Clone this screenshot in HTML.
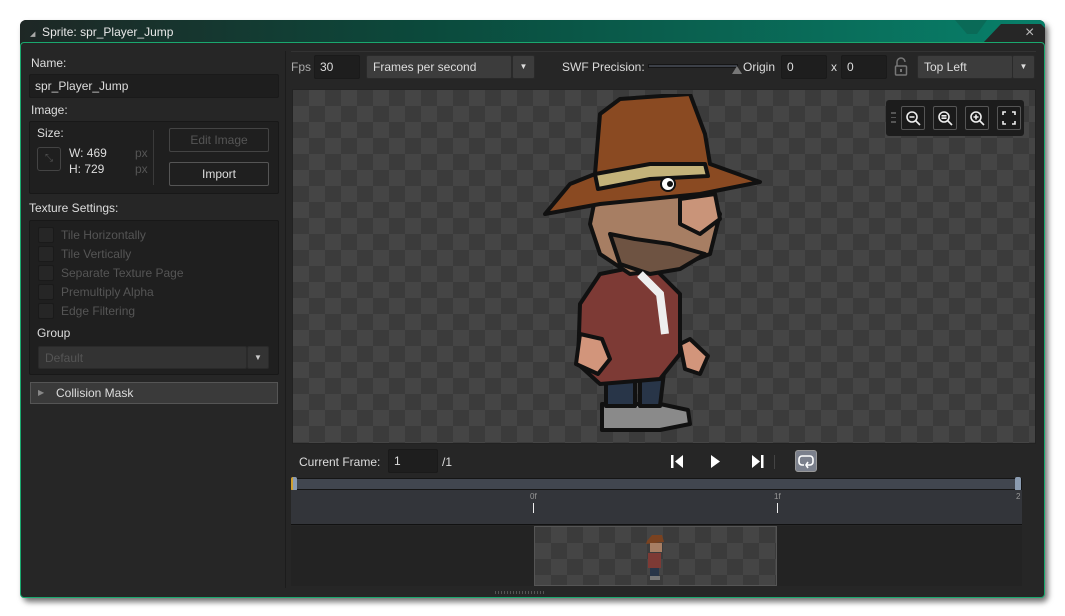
<!DOCTYPE html>
<html><head><meta charset="utf-8"><style>
*{box-sizing:border-box;margin:0;padding:0}
body{width:1065px;height:616px;background:#fff;font-family:"Liberation Sans",sans-serif;font-size:12px;color:#ddd;position:relative;overflow:hidden}
.abs{position:absolute}
.win{left:20px;top:20px;width:1025px;height:578px;background:#262626;border-radius:6px;box-shadow:3px 4px 6px rgba(0,0,0,.55)}
.title{left:20px;top:20px;width:1025px;height:23px;border-radius:6px 6px 0 0;background:linear-gradient(90deg,#1e2725 0%,#0b4a3c 40%,#08806a 100%)}
.body{left:20px;top:42px;width:1025px;height:556px;border:1px solid #1aa86e;border-radius:4px;background:#262626}
.lbl{color:#ddd;font-size:12px}
.box{background:#1f1f1f;border:1px solid #181818;border-radius:2px}
.inp{background:#1e1e1e;border:1px solid #1a1a1a;border-radius:2px;padding-left:5px;line-height:22px}
.btn{border:1px solid #555;border-radius:2px;text-align:center;line-height:22px}
.dd{background:#3c3c3c;border:1px solid #2a2a2a;border-radius:2px;padding-left:6px;line-height:22px}
.dis{color:#555}
.cb{width:16px;height:16px;border:1px solid #1a1a1a;background:#262626;border-radius:2px}
.checker{background-color:#3b3b3b;background-image:linear-gradient(45deg,#454545 25%,transparent 25%,transparent 75%,#454545 75%),linear-gradient(45deg,#454545 25%,transparent 25%,transparent 75%,#454545 75%);background-size:32px 32px;background-position:0 0,16px 16px}
.zb{width:24px;height:24px;border:1px solid #555;border-radius:2px;background:#1a1a1a}
</style></head><body>
<div class="abs win"></div>
<div class="abs title"></div>
<svg class="abs" style="left:955px;top:20px" width="90" height="23"><polygon points="0,0 32,0 22,14 12,14" fill="#0a6a57"/><polygon points="28,23 46,4 86,4 90,8 90,23" fill="#262626"/></svg>
<div class="abs" style="left:30px;top:25px;font-size:12px;color:#e8e8e8"><span style="font-size:7px;color:#aaa">◢</span>&nbsp; Sprite: spr_Player_Jump</div>
<div class="abs" style="left:1025px;top:24px;color:#bbb;font-size:16px">×</div>
<div class="abs body"></div>

<!-- left panel -->
<div class="abs lbl" style="left:31px;top:56px">Name:</div>
<div class="abs inp" style="left:29px;top:74px;width:250px;height:24px;color:#ddd">spr_Player_Jump</div>
<div class="abs lbl" style="left:31px;top:103px">Image:</div>
<div class="abs box" style="left:29px;top:121px;width:250px;height:73px"></div>
<div class="abs lbl" style="left:37px;top:126px">Size:</div>
<div class="abs" style="left:37px;top:147px;width:24px;height:24px;border:1px solid #444;border-radius:3px;color:#555;font-size:10px;text-align:center;line-height:22px">⤡</div>
<div class="abs lbl" style="left:69px;top:146px">W: 469</div>
<div class="abs lbl" style="left:69px;top:162px">H: 729</div>
<div class="abs dis" style="left:135px;top:146px">px</div>
<div class="abs dis" style="left:135px;top:162px">px</div>
<div class="abs" style="left:153px;top:130px;width:1px;height:55px;background:#3a3a3a"></div>
<div class="abs btn dis" style="left:169px;top:128px;width:100px;height:24px;border-color:#444">Edit Image</div>
<div class="abs btn" style="left:169px;top:162px;width:100px;height:24px">Import</div>
<div class="abs lbl" style="left:29px;top:201px">Texture Settings:</div>
<div class="abs box" style="left:29px;top:220px;width:250px;height:155px"></div>
<div class="abs cb" style="left:38px;top:227px"></div><div class="abs dis" style="left:61px;top:228px">Tile Horizontally</div>
<div class="abs cb" style="left:38px;top:246px"></div><div class="abs dis" style="left:61px;top:247px">Tile Vertically</div>
<div class="abs cb" style="left:38px;top:265px"></div><div class="abs dis" style="left:61px;top:266px">Separate Texture Page</div>
<div class="abs cb" style="left:38px;top:284px"></div><div class="abs dis" style="left:61px;top:285px">Premultiply Alpha</div>
<div class="abs cb" style="left:38px;top:303px"></div><div class="abs dis" style="left:61px;top:304px">Edge Filtering</div>
<div class="abs lbl" style="left:37px;top:326px">Group</div>
<div class="abs dd dis" style="left:38px;top:346px;width:209px;height:23px;background:#333">Default</div>
<div class="abs dd" style="left:247px;top:346px;width:22px;height:23px;background:#333;color:#ccc;padding:0;text-align:center;font-size:8px">▼</div>
<div class="abs" style="left:30px;top:382px;width:248px;height:22px;background:#3a3a3a;border:1px solid #555;padding-left:25px;line-height:20px;color:#ddd"><span class="abs" style="left:7px;color:#888;font-size:8px">▶</span>Collision Mask</div>

<!-- right panel -->
<div class="abs" style="left:285px;top:51px;width:1px;height:537px;background:#1c1c1c"></div>
<div class="abs" style="left:291px;top:51px;width:745px;height:1px;background:#333"></div>
<div class="abs" style="left:291px;top:60px;color:#aaa">Fps</div>
<div class="abs inp" style="left:314px;top:55px;width:46px;height:24px">30</div>
<div class="abs dd" style="left:366px;top:55px;width:146px;height:24px">Frames per second</div>
<div class="abs dd" style="left:512px;top:55px;width:23px;height:24px;padding:0;text-align:center;font-size:8px">▼</div>
<div class="abs lbl" style="left:562px;top:60px">SWF Precision:</div>
<div class="abs" style="left:648px;top:64px;width:90px;height:4px;background:#3c4048;border:1px solid #151515"></div>
<div class="abs" style="left:732px;top:66px;width:0;height:0;border-left:5px solid transparent;border-right:5px solid transparent;border-bottom:8px solid #777"></div>
<div class="abs lbl" style="left:743px;top:60px">Origin</div>
<div class="abs inp" style="left:781px;top:55px;width:46px;height:24px">0</div>
<div class="abs lbl" style="left:831px;top:60px">x</div>
<div class="abs inp" style="left:841px;top:55px;width:46px;height:24px">0</div>
<svg class="abs" style="left:893px;top:57px" width="16" height="20"><path d="M4 9V5a4 4 0 0 1 8 0" stroke="#777" stroke-width="1.5" fill="none"/><rect x="2.5" y="9" width="11" height="9" rx="1" stroke="#777" stroke-width="1.5" fill="none"/><rect x="7" y="12" width="2" height="3" fill="#777"/></svg>
<div class="abs dd" style="left:917px;top:55px;width:96px;height:24px">Top Left</div>
<div class="abs dd" style="left:1012px;top:55px;width:23px;height:24px;padding:0;text-align:center;font-size:8px">▼</div>

<div class="abs checker" style="left:292px;top:89px;width:744px;height:355px;border:1px solid #222"></div>
<div class="abs" style="left:886px;top:100px;width:138px;height:36px;background:#1a1a1a;border-radius:3px;opacity:.95"></div>
<div class="abs" style="left:891px;top:112px;width:5px;height:11px;border-top:1px solid #555;border-bottom:1px solid #555;background:linear-gradient(#555 0 1px,transparent 1px 4px,#555 4px 5px,transparent 5px 8px,#555 8px 9px,transparent 9px)"></div>
<div class="abs zb" style="left:901px;top:106px"></div>
<div class="abs zb" style="left:933px;top:106px"></div>
<div class="abs zb" style="left:965px;top:106px"></div>
<div class="abs zb" style="left:997px;top:106px"></div>
<svg class="abs" style="left:901px;top:106px" width="120" height="24" fill="none" stroke="#eee" stroke-width="1.6">
<circle cx="11" cy="11" r="5"/><path d="M15 15l4 4M8.5 11h5"/>
<g transform="translate(32 0)"><circle cx="11" cy="11" r="5"/><path d="M15 15l4 4M8.5 9.8h5M8.5 12.2h5"/></g>
<g transform="translate(64 0)"><circle cx="11" cy="11" r="5"/><path d="M15 15l4 4M8.5 11h5M11 8.5v5"/></g>
<g transform="translate(96 0)"><path d="M6 9V6h3M15 6h3v3M18 15v3h-3M9 18H6v-3"/></g>
</svg>

<!-- character -->
<svg class="abs" style="left:540px;top:94px" width="225" height="342" viewBox="0 0 225 342">
<g stroke="#111" stroke-width="4" stroke-linejoin="round">
<path d="M62 310 L62 336 L120 336 L150 330 L148 316 L120 310Z" fill="#8a8a8a"/>
<path d="M66 270 L66 312 L95 312 L95 270Z M100 270 L100 312 L120 312 L125 270Z" fill="#283548"/>
<path d="M60 180 L40 210 L38 270 L60 290 L120 285 L140 260 L140 200 L110 170Z" fill="#7d3a35"/>
<path d="M40 240 L36 270 L58 280 L70 265 L62 245Z" fill="#d2957b"/>
<path d="M140 250 L145 275 L160 280 L168 262 L150 245Z" fill="#d2957b"/>
<path d="M60 80 L50 130 L60 160 L90 180 L130 175 L170 160 L180 120 L160 90Z" fill="#a77e63"/>
<path d="M70 140 L80 170 L110 180 L140 175 L165 160 L130 150 L95 145Z" fill="#6e5342"/>
<path d="M140 105 L175 100 L180 125 L160 140 L140 130Z" fill="#c99479"/>
<path d="M60 20 L80 5 L150 0 L165 40 L170 70 L220 88 L160 100 L110 105 L60 110 L5 120 L30 90 L55 80Z" fill="#8a4a22"/>
<path d="M55 80 L110 70 L165 70 L168 82 L110 85 L58 95Z" fill="#c4b37a"/>
</g>
<circle cx="128" cy="90" r="7" fill="#fff" stroke="#111" stroke-width="2"/><circle cx="130" cy="90" r="3" fill="#111"/>
<path d="M100 180 L120 200 L125 240" stroke="#eee" stroke-width="8" fill="none"/>
</svg>

<!-- playback -->
<div class="abs lbl" style="left:299px;top:455px">Current Frame:</div>
<div class="abs inp" style="left:388px;top:449px;width:50px;height:24px">1</div>
<div class="abs lbl" style="left:442px;top:455px">/1</div>
<svg class="abs" style="left:668px;top:452px" width="160" height="20" fill="#fff">
<rect x="3" y="3" width="2.5" height="13"/><polygon points="15,3 15,16 7,9.5"/>
<polygon points="43,3 43,16 52,9.5"/>
<polygon points="84,3 84,16 92,9.5"/><rect x="93" y="3" width="2.5" height="13"/>
<rect x="106" y="3" width="1" height="14" fill="#444"/>
</svg>
<div class="abs" style="left:795px;top:450px;width:22px;height:22px;background:#7b808c;border:1px solid #999;border-radius:3px"></div>
<svg class="abs" style="left:795px;top:450px" width="22" height="22" fill="none" stroke="#fff" stroke-width="1.6"><path d="M9 15H7a3 3 0 0 1-3-3V9a3 3 0 0 1 3-3h8a3 3 0 0 1 3 3v3a3 3 0 0 1-3 3h-3"/><path d="M13 12l-2 3 2 3"/></svg>

<div class="abs" style="left:291px;top:478px;width:731px;height:12px;background:#41464f;border:1px solid #151515"></div>
<div class="abs" style="left:291px;top:477px;width:6px;height:14px;background:#8a9bb0;border-radius:2px;border-left:2px solid #d0a030"></div>
<div class="abs" style="left:1015px;top:477px;width:6px;height:14px;background:#8a9bb0;border-radius:2px"></div>
<div class="abs" style="left:291px;top:490px;width:731px;height:35px;background:#33353a;border-bottom:1px solid #111"></div>
<div class="abs" style="left:530px;top:492px;color:#999;font-size:8px">0f</div>
<div class="abs" style="left:533px;top:503px;width:1px;height:10px;background:#eee"></div>
<div class="abs" style="left:774px;top:492px;color:#999;font-size:8px">1f</div>
<div class="abs" style="left:777px;top:503px;width:1px;height:10px;background:#eee"></div>
<div class="abs" style="left:1016px;top:492px;color:#999;font-size:8px">2</div>
<div class="abs" style="left:291px;top:526px;width:731px;height:60px;background:#232323"></div>
<div class="abs checker" style="left:534px;top:526px;width:243px;height:60px;border:1px solid #555"></div>
<svg class="abs" style="left:640px;top:533px" width="30" height="50"><path d="M7 8L12 2h10l2 7-18 2z" fill="#7a4220"/><rect x="10" y="10" width="12" height="9" fill="#a77e63"/><rect x="8" y="20" width="13" height="15" fill="#7d3a35"/><rect x="10" y="35" width="9" height="8" fill="#283548"/><rect x="10" y="43" width="10" height="4" fill="#777"/></svg>
<div class="abs" style="left:495px;top:591px;width:50px;height:3px;background:repeating-linear-gradient(90deg,#555 0 1px,transparent 1px 3px)"></div>
</body></html>
